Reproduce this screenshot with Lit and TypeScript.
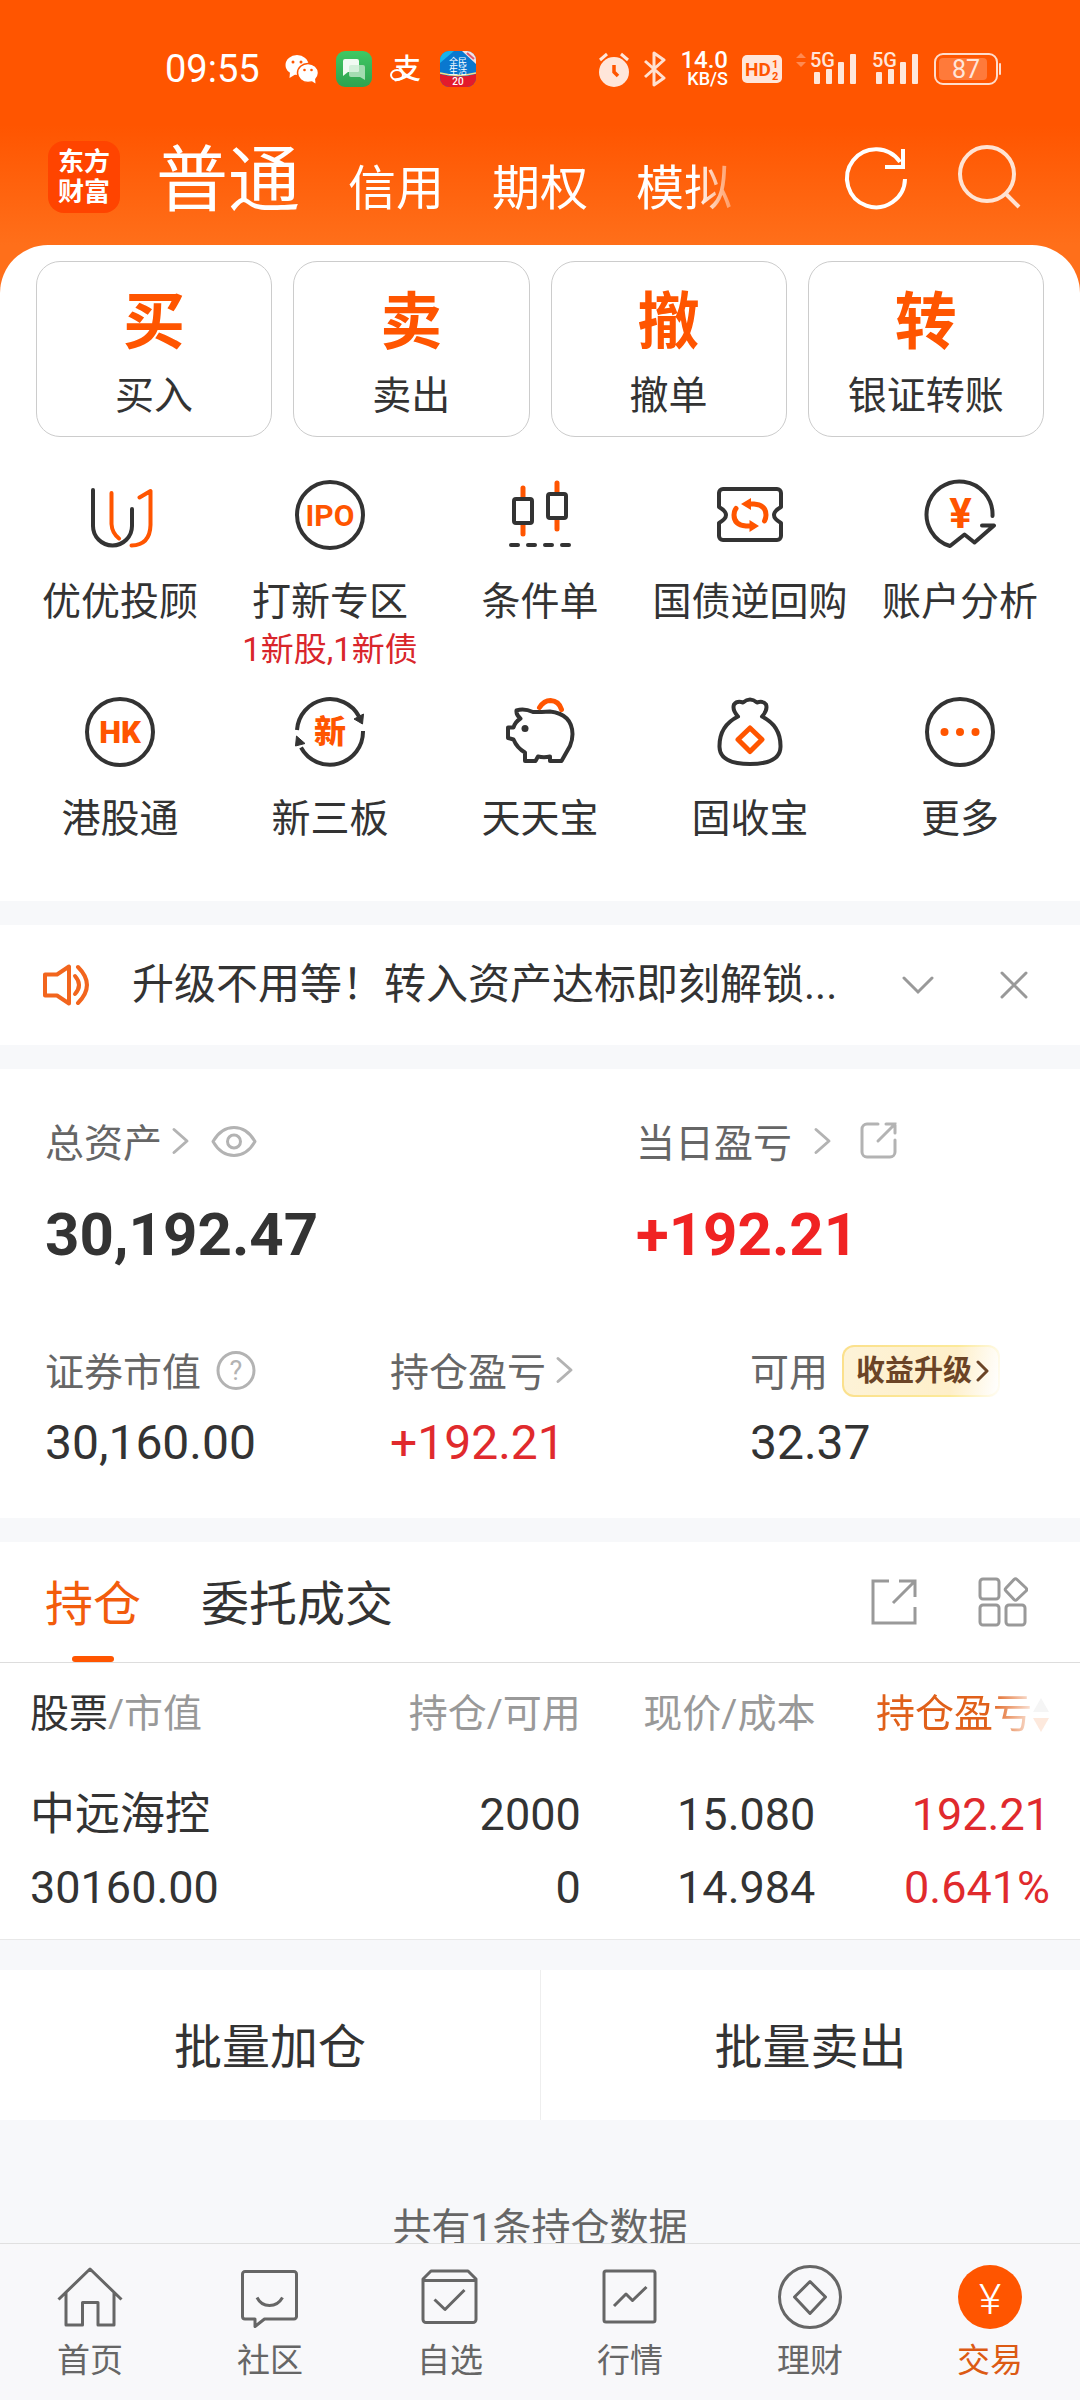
import { LitElement, html, css, svg, nothing } from "lit";
import type { TemplateResult } from "lit";
import { customElement, property, state } from "lit/decorators.js";
import { classMap } from "lit/directives/class-map.js";

type Shape = { w: number; h: number; art: TemplateResult };

const DARK = "#333";
const FLAME = "#ff5500";

const shapes: Record<string, Shape> = {
  /* status bar */
  wechat: {
    w: 36, h: 32,
    art: svg`<g fill="#fff"><ellipse cx="13" cy="12" rx="11.500" ry="10"/><path d="M6 19L5.500 25L12 21Z"/></g>
      <g fill="#fff" stroke="#ff5500" stroke-width="1.500"><ellipse cx="24" cy="20" rx="10.500" ry="9.500"/></g>
      <path d="M26 27L31.500 30.500L31 25Z" fill="#fff"/>
      <g fill="#ff5500"><circle cx="9" cy="9" r="1.500"/><circle cx="17" cy="9" r="1.500"/><circle cx="20.500" cy="17" r="1.300"/><circle cx="27.500" cy="17" r="1.300"/></g>`,
  },
  sms: {
    w: 36, h: 36,
    art: svg`<defs><linearGradient id="g" x1="0" y1="0" x2="0" y2="1"><stop offset="0" stop-color="#3fc863"/><stop offset="1" stop-color="#2fa250"/></linearGradient></defs>
      <rect width="36" height="36" rx="9" fill="url(#g)"/>
      <path d="M15 14H27a2 2 0 0 1 2 2V29L24 26H15a2 2 0 0 1-2-2V16a2 2 0 0 1 2-2Z" fill="#a3dcb1"/>
      <path d="M9 8H21a2 2 0 0 1 2 2V19a2 2 0 0 1-2 2H12L7 25V10a2 2 0 0 1 2-2Z" fill="#f1fbf3"/>
      <path d="M13 16a2 2 0 0 1 2-2H23V19a2 2 0 0 1-2 2H13Z" fill="#d3f0da"/>`,
  },
  alipay: {
    w: 36, h: 36,
    art: svg`<text x="19" y="28" font-size="28" font-weight="500" text-anchor="middle" fill="#fff">支</text>
      <ellipse cx="9" cy="24" rx="6" ry="5" fill="none" stroke="#fff" stroke-width="2"/>`,
  },
  life: {
    w: 36, h: 36,
    art: svg`<defs><clipPath id="c"><rect width="36" height="36" rx="9"/></clipPath></defs>
      <g clip-path="url(#c)"><rect width="36" height="36" fill="#0a78cf"/>
      <path d="M0 0H14L0 12Z" fill="#19b3ea"/><path d="M22 0H36V13Z" fill="#f3e3e6"/><path d="M27 2L34 8" stroke="#e4586b" stroke-width="2"/>
      <path d="M0 23Q18 28 36 23V36H0Z" fill="#e31b2c"/><path d="M0 22Q18 27 36 22" fill="none" stroke="#f5e08a" stroke-width="1.500"/></g>
      <g fill="#fff" text-anchor="middle"><text x="18" y="14" font-size="9">全民</text><text x="18" y="23" font-size="9">生活</text>
      <text x="18" y="34" font-size="10" font-weight="500">20</text></g>`,
  },
  alarm: {
    w: 32, h: 36,
    art: svg`<circle cx="16" cy="21" r="15" fill="#ffe6da"/><path d="M2 9L9 3M23 3L30 9" stroke="#ffe6da" stroke-width="3"/>
      <path d="M16 14V21L20 25" fill="none" stroke="#ff5500" stroke-width="3.500"/>`,
  },
  bluetooth: {
    w: 22, h: 36,
    art: svg`<path d="M1 10L20 27L10 34V2L20 9L1 26" fill="none" stroke="#ffe0d0" stroke-width="3" stroke-linejoin="round"/>`,
  },
  hd: {
    w: 40, h: 28,
    art: svg`<rect width="40" height="28" rx="5" fill="#ffe6da"/>
      <g fill="#ff5500" font-weight="700"><text x="3" y="21" font-size="19">HD</text><text x="30" y="13" font-size="11">1</text><text x="30" y="25" font-size="11">2</text></g>`,
  },
  updown: {
    w: 10, h: 34,
    art: svg`<path d="M0 6L5 1L10 6ZM0 10H10L5 15Z" fill="#ff8a52"/>`,
  },
  signal: {
    w: 48, h: 44,
    art: svg`<text x="0" y="20" font-size="20" font-weight="500" fill="#ffe6da">5G</text>
      <g fill="#ffe6da"><rect x="4" y="25" width="6" height="12" rx="1"/><rect x="16" y="22" width="6" height="15" rx="1"/><rect x="28" y="15" width="6" height="22" rx="1"/><rect x="40" y="7" width="6" height="30" rx="1"/></g>`,
  },
  battery: {
    w: 68, h: 32,
    art: svg`<rect x="1" y="1" width="62" height="30" rx="8" fill="none" stroke="#ffdccb" stroke-width="2"/>
      <rect x="5" y="5" width="48" height="22" rx="4" fill="#ff7a3a"/><rect x="65" y="10" width="2" height="12" rx="1" fill="#ffdccb"/>
      <text x="32" y="25" font-size="25" text-anchor="middle" fill="#ffe6da">87</text>`,
  },
  /* title bar */
  refresh: {
    w: 72, h: 72,
    art: svg`<g fill="none" stroke="#fff" stroke-width="4"><path d="M65 38A29 29 0 1 1 60 21"/><path d="M45 26H63V8"/></g>`,
  },
  search: {
    w: 72, h: 72,
    art: svg`<g fill="none" stroke="#ffe3d3" stroke-width="4"><circle cx="33" cy="33" r="27"/><path d="M52 53L65 66"/></g>`,
  },
  /* shortcut grid */
  advisor: {
    w: 72, h: 72,
    art: svg`<g fill="none" stroke-width="4" stroke-linecap="round" stroke-linejoin="round"><path d="M9 11V47A19.500 19.500 0 0 0 48 47V30" stroke="${DARK}"/>
      <path d="M27.500 14V45Q28 54 35 59.500M55.500 18.500L66.500 12V46Q66 66 47.500 66.500" stroke="${FLAME}"/></g>`,
  },
  ipo: {
    w: 72, h: 72,
    art: svg`<circle cx="36" cy="36" r="33" fill="none" stroke="${DARK}" stroke-width="4"/>
      <text x="36" y="47" font-size="30" font-weight="700" text-anchor="middle" fill="${FLAME}">IPO</text>`,
  },
  candles: {
    w: 72, h: 72,
    art: svg`<g fill="none" stroke-width="4" stroke-linecap="round"><path d="M19 9V18M19 46V55M53 4V13M53 41V50" stroke="${FLAME}" stroke-width="5"/>
      <g stroke="${DARK}"><rect x="10" y="20" width="18" height="24" rx="2"/><rect x="44" y="15" width="18" height="24" rx="2"/><path d="M7 66H14M24 66H31M41 66H48M58 66H65"/></g></g>`,
  },
  repo: {
    w: 72, h: 72,
    art: svg`<path d="M9 10H63a4 4 0 0 1 4 4V28Q60 32 60 36T67 44V57a4 4 0 0 1-4 4H9a4 4 0 0 1-4-4V44Q12 40 12 36T5 28V14a4 4 0 0 1 4-4Z" fill="none" stroke="${DARK}" stroke-width="4" stroke-linejoin="round"/>
      <g fill="none" stroke="${FLAME}" stroke-width="5" stroke-linecap="round"><path d="M35 25H40Q52 26 52 36Q52 39 50.500 42"/><path d="M37 47H32Q20 46 20 36Q20 32 22 29.500"/></g>
      <path d="M27 25L37 19V31ZM45 47L35.500 41V53Z" fill="${FLAME}"/>`,
  },
  analysis: {
    w: 72, h: 72,
    art: svg`<path d="M68.500 37A33 33 0 1 0 26 67L40.500 55.500L50.500 63.500L70 46.500H58" fill="none" stroke="${DARK}" stroke-width="4" stroke-linecap="round" stroke-linejoin="round"/>
      <text x="36.500" y="49" font-size="42" font-weight="700" text-anchor="middle" fill="${FLAME}">¥</text>`,
  },
  hk: {
    w: 72, h: 72,
    art: svg`<circle cx="36" cy="36" r="33" fill="none" stroke="${DARK}" stroke-width="4"/>
      <text x="36" y="47" font-size="31" font-weight="900" text-anchor="middle" fill="${FLAME}">HK</text>`,
  },
  otc: {
    w: 72, h: 72,
    art: svg`<g fill="none" stroke="${DARK}" stroke-width="4"><path d="M3 34A33 33 0 0 1 65 20.500"/><path d="M69 35A33 33 0 0 1 7 51.500"/></g>
      <path d="M60 23L69.500 18L68.500 28ZM2.500 40L1.500 50L11 47.500Z" fill="${DARK}" stroke="${DARK}"/>
      <text x="36" y="47" font-size="32" font-weight="900" text-anchor="middle" fill="${FLAME}">新</text>`,
  },
  piggy: {
    w: 72, h: 72,
    art: svg`<path d="M12.500 14.500Q20 12 29 16Q38 16 46 15.500Q68 18 68.500 38Q68.500 44 66 50L57.500 65H46V60.500Q40 62 34 60.500L31.500 65H21V56.500Q13 52 9.500 43.500L4 42V31.500H9.500Q11 26 16.500 22.500Q12 19 12.500 14.500Z" fill="none" stroke="${DARK}" stroke-width="4" stroke-linejoin="round"/>
      <circle cx="21" cy="32.500" r="3.500" fill="${DARK}"/><path d="M35.500 11.500Q40 4.500 46.500 4.500Q55 5 57.500 13.500" fill="none" stroke="${FLAME}" stroke-width="5" stroke-linecap="round"/>`,
  },
  bag: {
    w: 72, h: 72,
    art: svg`<path d="M24 20.500Q18 14 20 8.500Q23 4.500 29 6.500Q36 0.500 43 6.500Q49 4.500 52 8.500Q54 14 48 20.500Q67 30 66.500 51Q66 68 36 68Q6 68 5.500 51Q5 30 24 20.500Z" fill="none" stroke="${DARK}" stroke-width="4" stroke-linejoin="round"/>
      <path d="M36 32L48 43.500L36 55.500L24 43.500Z" fill="none" stroke="${FLAME}" stroke-width="5" stroke-linejoin="round"/>`,
  },
  more: {
    w: 72, h: 72,
    art: svg`<circle cx="36" cy="36" r="33" fill="none" stroke="${DARK}" stroke-width="4"/><g fill="${FLAME}"><circle cx="20.500" cy="36" r="4"/><circle cx="36" cy="36" r="4"/><circle cx="51.500" cy="36" r="4"/></g>`,
  },
  /* notice */
  speaker: {
    w: 48, h: 44,
    art: svg`<g fill="none" stroke="#f2651d" stroke-width="4" stroke-linejoin="round" stroke-linecap="round"><path d="M27 3.500V40.500L15 32.500H3V11.500H15Z"/><path d="M33 13Q41 22 33 31"/><path d="M36 4Q54 22 36 40"/></g>`,
  },
  down: { w: 32, h: 28, art: svg`<path d="M2 7L16 21L30 7" fill="none" stroke="#999" stroke-width="3" stroke-linecap="round"/>` },
  close: { w: 28, h: 28, art: svg`<path d="M2 2L26 26M26 2L2 26" fill="none" stroke="#999" stroke-width="3" stroke-linecap="round"/>` },
  /* assets */
  chevron: { w: 20, h: 48, art: svg`<path d="M4 9.500L17 21L4 32.500" fill="none" stroke="#b3b3b3" stroke-width="3" stroke-linecap="round" stroke-linejoin="round"/>` },
  eye: {
    w: 48, h: 48,
    art: svg`<g fill="none" stroke="#b3b3b3" stroke-width="3"><path d="M3 21.500C9 11 16 7.500 24 7.500S39 11 45 21.500C39 32 32 35.500 24 35.500S9 32 3 21.500Z" stroke-linejoin="round"/><circle cx="24" cy="21.500" r="6.500"/></g>`,
  },
  share: {
    w: 40, h: 48,
    art: svg`<g fill="none" stroke="#b3b3b3" stroke-width="3" stroke-linecap="round"><path d="M20 4H9a5 5 0 0 0-5 5V32a5 5 0 0 0 5 5H32a5 5 0 0 0 5-5V20"/><path d="M20 21L37 4M28 4H37V13"/></g>`,
  },
  help: {
    w: 40, h: 48,
    art: svg`<circle cx="20" cy="21.500" r="18" fill="none" stroke="#b3b3b3" stroke-width="3"/><text x="20" y="31" font-size="27" text-anchor="middle" fill="#b3b3b3">?</text>`,
  },
  go: { w: 14, h: 24, art: svg`<path d="M2 3L11 12L2 21" fill="none" stroke="#6b4426" stroke-width="3" stroke-linecap="round" stroke-linejoin="round"/>` },
  /* positions */
  export: { w: 48, h: 48, art: svg`<path d="M19 3H3V45H45V29M23 25L45 3M29 3H45V19" fill="none" stroke="#999" stroke-width="3"/>` },
  tiles: {
    w: 50, h: 50,
    art: svg`<g fill="none" stroke="#999" stroke-width="3" stroke-linejoin="round"><rect x="2" y="2" width="19" height="20" rx="3"/><rect x="2" y="28" width="19" height="20" rx="3"/><rect x="28" y="28" width="19" height="20" rx="3"/>
      <path d="M36 2.500Q37.500 1 39 2.500L48 11Q49.500 12.500 48 14L39 22.500Q37.500 24 36 22.500L28 14Q26.500 12.500 28 11Z"/></g>`,
  },
  sort: { w: 18, h: 40, art: svg`<path d="M1 18L9 4L17 18Z" fill="#bbb"/><path d="M1 24H17L9 38Z" fill="#f26a1b"/>` },
  /* bottom navigation */
  home: { w: 66, h: 66, art: svg`<path d="M1.500 35.500L33 5L64.500 35.500M9 29V61H25.500V38.500H41V61H57V29" fill="none" stroke="#666" stroke-width="3" stroke-linejoin="round"/>` },
  community: {
    w: 66, h: 66,
    art: svg`<path d="M8 7.500H57a2.500 2.500 0 0 1 2.500 2.500V52.500a2.500 2.500 0 0 1-2.500 2.500H27.500L18 62.500V55H8a2.500 2.500 0 0 1-2.500-2.500V10a2.500 2.500 0 0 1 2.500-2.500ZM20 33.500Q24 41.500 32.500 41.500T45.500 33.500" fill="none" stroke="#666" stroke-width="3" stroke-linejoin="round"/>`,
  },
  watch: {
    w: 66, h: 66,
    art: svg`<path d="M6 15L14 7H51L59 15V55.500a3 3 0 0 1-3 3H9a3 3 0 0 1-3-3ZM6 16.500H59M17.500 35.500L28 45.500L47.500 26" fill="none" stroke="#666" stroke-width="3" stroke-linejoin="round"/>`,
  },
  quotes: {
    w: 66, h: 66,
    art: svg`<rect x="7" y="7" width="51" height="51" rx="2" fill="none" stroke="#666" stroke-width="3"/><path d="M17 42L29 30L35.500 36.500L49.500 23" fill="none" stroke="#666" stroke-width="3" stroke-linejoin="round"/>`,
  },
  wealth: {
    w: 66, h: 66,
    art: svg`<circle cx="33" cy="33" r="30.500" fill="none" stroke="#666" stroke-width="3"/><path d="M33 17.500L48.500 33L33 49.500L17.500 33Z" fill="none" stroke="#666" stroke-width="3" stroke-linejoin="round"/>`,
  },
  trade: {
    w: 66, h: 66,
    art: svg`<circle cx="33" cy="33" r="32" fill="${FLAME}"/><text x="33" y="50" font-size="43" font-weight="300" text-anchor="middle" fill="#fff">¥</text>`,
  },
};

@customElement("app-glyph")
class AppGlyph extends LitElement {
  static styles = css`
    :host { display: inline-flex; flex: none; }
    .art { display: block; }
    text { font-family: Roboto, "Noto Sans CJK SC", sans-serif; }
  `;
  @property() name = "";
  render() {
    const s = shapes[this.name];
    return html`<svg class="art" width=${s.w} height=${s.h} viewBox="0 0 ${s.w} ${s.h}" aria-hidden="true">${s.art}</svg>`;
  }
}

const actions = [["买", "买入"], ["卖", "卖出"], ["撤", "撤单"], ["转", "银证转账"]];
const shortcuts: { icon: string; label: string; sub?: string }[] = [
  { icon: "advisor", label: "优优投顾" },
  { icon: "ipo", label: "打新专区", sub: "1新股,1新债" },
  { icon: "candles", label: "条件单" },
  { icon: "repo", label: "国债逆回购" },
  { icon: "analysis", label: "账户分析" },
  { icon: "hk", label: "港股通" },
  { icon: "otc", label: "新三板" },
  { icon: "piggy", label: "天天宝" },
  { icon: "bag", label: "固收宝" },
  { icon: "more", label: "更多" },
];
const positions = [
  { name: "中远海控", value: "30160.00", held: "2000", usable: "0", price: "15.080", cost: "14.984", gain: "192.21", rate: "0.641%" },
];
const destinations = [
  ["home", "首页"], ["community", "社区"], ["watch", "自选"], ["quotes", "行情"], ["wealth", "理财"], ["trade", "交易"],
];

@customElement("app-root")
class AppRoot extends LitElement {
  static styles = css`
    :host {
      display: flex;
      flex-direction: column;
      height: 100vh;
      background: #f7f8fa;
      color: #333;
      font-family: Roboto, "Noto Sans CJK SC", sans-serif;
      font-size: 39px;
      line-height: 48px;
    }
    * { box-sizing: border-box; }
    button { margin: 0; padding: 0; border: 0; background: none; color: inherit; font: inherit; text-align: inherit; cursor: pointer; }
    a { color: inherit; text-decoration: none; }

    .page {
      flex: 1;
      min-height: 0;
      overflow: hidden auto;
      scrollbar-width: none;
      background: linear-gradient(#ff5500 0, #ff5500 125px, #ff6f1a 245px) no-repeat;
      background-size: 100% 300px;
    }
    .status { display: flex; align-items: center; justify-content: space-between; height: 138px; padding: 0 78px 0 165px; color: #fff; }
    .status-side { display: flex; align-items: center; }
    .left { gap: 16px; }
    .right { gap: 14px; }
    .clock { font-size: 38px; margin-right: 8px; }
    .net { display: flex; flex-direction: column; align-items: flex-end; font-weight: 500; }
    .net-rate { font-size: 24px; line-height: 20px; }
    .net-unit { font-size: 18px; line-height: 18px; }
    .cell { display: flex; align-items: center; gap: 4px; }

    .title { display: flex; align-items: center; height: 78px; margin-bottom: 29px; padding: 0 54px 0 48px; color: #fff; }
    .logo {
      display: flex; flex-direction: column; justify-content: center; flex: none; width: 72px; height: 72px;
      border-radius: 16px; background: #ff4400; text-align: center; font-size: 26px; font-weight: 700; line-height: 30px;
    }
    .accounts {
      display: flex; align-items: baseline; gap: 48px; flex: 1; min-width: 0; margin: 0 48px 0 36px; padding-top: 16px; overflow: hidden; white-space: nowrap;
      mask-image: linear-gradient(to right, #000 calc(100% - 96px), transparent calc(100% - 42px));
    }
    .account { font-size: 48px; line-height: 84px; }
    .account.on { font-size: 72px; }
    .tools { display: flex; gap: 42px; }
    .tool { display: flex; }

    .sheet { padding: 16px 0 58px; border-radius: 48px 48px 0 0; background: #fff; }
    .actions { display: grid; grid-template-columns: repeat(4, 1fr); gap: 21px; padding: 0 36px; }
    .action { display: flex; flex-direction: column; align-items: center; gap: 10px; padding: 22px 0 16px; border: 1px solid #ccc; border-radius: 24px; }
    .mark { color: #ff5500; font-size: 62px; font-weight: 700; line-height: 78px; }
    .shortcuts { display: grid; grid-template-columns: repeat(5, 1fr); row-gap: 26px; margin-top: 42px; padding: 0 15px; }
    .shortcut { display: flex; flex-direction: column; align-items: center; white-space: nowrap; }
    .caption { margin-top: 27px; }
    .sub { margin-top: 4px; color: #d9262b; font-size: 33px; line-height: 40px; }

    .band { margin-top: 24px; background: #fff; }
    .lower { background: #f7f8fa; display: flow-root; }
    .notice { display: flex; align-items: center; height: 120px; padding: 0 52px 0 42px; }
    .message { flex: 1; min-width: 0; margin: 0 42px; overflow: hidden; white-space: nowrap; text-overflow: ellipsis; font-size: 42px; }
    .notice-tools { display: flex; gap: 66px; }

    .assets { padding: 51px 45px 45px; }
    .pair { display: grid; grid-template-columns: 591fr 399fr; }
    .trio { display: grid; grid-template-columns: 345fr 360fr 285fr; margin-top: 78px; }
    .label { display: flex; align-items: center; height: 48px; color: #666; white-space: nowrap; }
    .label button, .label span { display: flex; }
    .near { margin-left: 8px; }
    .mid { margin-left: 15px; }
    .far { margin-left: 20px; }
    .wide { margin-left: 26px; }
    .big { margin-top: 31px; font-size: 60px; font-weight: 700; line-height: 72px; }
    .num { margin-top: 16px; font-size: 48px; line-height: 60px; }
    .up { color: #e02a2d; }
    .big.up { color: #f02323; }
    .label .badge {
      align-items: center; align-self: flex-end; gap: 4px; height: 52px; margin-left: 14px; padding: 0 8px 0 12px; border: 2px solid transparent; border-radius: 12px;
      background:
        linear-gradient(100deg, #fdf3d8 0, #feefc9 70%, #fff 100%) padding-box,
        linear-gradient(100deg, #fbe08c 0, #fcea9a 70%, #fffdf6 100%) border-box;
      color: #6b4426; font-size: 29px; font-weight: 700;
    }

    .tabs { display: flex; align-items: center; padding: 0 52px 0 45px; border-bottom: 1px solid #ddd; }
    .tab { display: flex; flex-direction: column; align-items: center; margin-right: 60px; padding-top: 12px; font-size: 48px; line-height: 102px; }
    .tab::after { content: ""; width: 42px; height: 6px; border-radius: 3px; }
    .tab.on { color: #f25c0c; }
    .tab.on::after { background: #ff5500; }
    .tab-tools { display: flex; align-items: center; gap: 60px; margin-left: auto; }

    .holdings { padding: 0 30px 15px; border-bottom: 1px solid #e8e8e8; }
    .grid { width: 100%; border-collapse: collapse; table-layout: fixed; }
    .grid th { padding: 27px 0 40px; color: #999; font-weight: 400; text-align: right; white-space: nowrap; }
    .grid td { padding: 0; text-align: right; font-size: 45px; line-height: 73px; }
    .grid th:first-child, .grid td:first-child { text-align: left; }
    .c-name { width: 31%; }
    .c-held { width: 23%; }
    .strong { color: #333; }
    .line { display: block; }
    .sorter { display: inline-flex; align-items: center; height: 48px; color: #e0601a; mask-image: linear-gradient(to right, #000 66%, rgba(0, 0, 0, 0.15) 90%); vertical-align: top; }

    .batch { display: grid; grid-template-columns: 1fr 1fr; margin-top: 30px; background: #fff; }
    .batch-button { padding: 48px 0 42px; font-size: 48px; line-height: 60px; text-align: center; }
    .batch-button + .batch-button { border-left: 1px solid #eee; }
    .count { margin: 84px 0 0; padding-bottom: 48px; color: #666; text-align: center; }

    .nav { display: grid; grid-template-columns: repeat(6, 1fr); flex: none; padding: 20px 0 19px; border-top: 1px solid #e0e0e0; background: #f8f8fa; }
    .dest { display: flex; flex-direction: column; align-items: center; gap: 11px; color: #666; font-size: 33px; line-height: 40px; }
    .dest.on { color: #dc5a14; }
  `;

  @state() private account = "普通";
  @state() private tab = "持仓";

  private icon(name: string) {
    return html`<app-glyph name=${name}></app-glyph>`;
  }

  render() {
    return html`
      <main class="page">
        <div class="status">
          <div class="status-side left">
            <time class="clock">09:55</time>
            ${["wechat", "sms", "alipay", "life"].map((n) => this.icon(n))}
          </div>
          <div class="status-side right">
            ${this.icon("alarm")}${this.icon("bluetooth")}
            <span class="net"><span class="net-rate">14.0</span><span class="net-unit">KB/S</span></span>
            ${this.icon("hd")}
            <span class="cell">${this.icon("updown")}${this.icon("signal")}</span>
            ${this.icon("signal")}${this.icon("battery")}
          </div>
        </div>

        <header class="title">
          <div class="logo"><span>东方</span><span>财富</span></div>
          <nav class="accounts">
            ${["普通", "信用", "期权", "模拟"].map(
              (a) => html`<button class=${classMap({ account: true, on: a === this.account })} @click=${() => (this.account = a)}>${a}</button>`
            )}
          </nav>
          <div class="tools">
            <button class="tool" aria-label="刷新">${this.icon("refresh")}</button>
            <button class="tool" aria-label="搜索">${this.icon("search")}</button>
          </div>
        </header>

        <section class="sheet">
          <div class="actions">
            ${actions.map(([mark, label]) => html`<button class="action"><span class="mark">${mark}</span><span>${label}</span></button>`)}
          </div>
          <div class="shortcuts">
            ${shortcuts.map(
              (s) => html`<a class="shortcut" href="#${s.icon}">${this.icon(s.icon)}<span class="caption">${s.label}</span>${s.sub ? html`<span class="sub">${s.sub}</span>` : nothing}</a>`
            )}
          </div>
        </section>

        <div class="lower">
          <section class="band notice">
            ${this.icon("speaker")}
            <span class="message">升级不用等！转入资产达标即刻解锁...</span>
            <div class="notice-tools">
              <button class="tool" aria-label="展开">${this.icon("down")}</button>
              <button class="tool" aria-label="关闭">${this.icon("close")}</button>
            </div>
          </section>

          <section class="band assets">
            <div class="pair">
              <div>
                <div class="label"><span>总资产</span><span class="near">${this.icon("chevron")}</span><button class="far" aria-label="隐藏金额">${this.icon("eye")}</button></div>
                <div class="big">30,192.47</div>
              </div>
              <div>
                <div class="label"><span>当日盈亏</span><span class="far">${this.icon("chevron")}</span><button class="wide" aria-label="分享">${this.icon("share")}</button></div>
                <div class="big up">+192.21</div>
              </div>
            </div>
            <div class="trio">
              <div>
                <div class="label"><span>证券市值</span><button class="mid" aria-label="说明">${this.icon("help")}</button></div>
                <div class="num">30,160.00</div>
              </div>
              <div>
                <div class="label"><span>持仓盈亏</span><span class="near">${this.icon("chevron")}</span></div>
                <div class="num up">+192.21</div>
              </div>
              <div>
                <div class="label"><span>可用</span><button class="badge"><span>收益升级</span>${this.icon("go")}</button></div>
                <div class="num">32.37</div>
              </div>
            </div>
          </section>

          <section class="band">
            <div class="tabs">
              ${["持仓", "委托成交"].map(
                (t) => html`<button class=${classMap({ tab: true, on: t === this.tab })} @click=${() => (this.tab = t)}>${t}</button>`
              )}
              <div class="tab-tools">
                <button class="tool" aria-label="分享持仓">${this.icon("export")}</button>
                <button class="tool" aria-label="布局">${this.icon("tiles")}</button>
              </div>
            </div>
            <div class="holdings">
              <table class="grid">
                <colgroup><col class="c-name" /><col class="c-held" /><col /><col /></colgroup>
                <thead>
                  <tr>
                    <th scope="col"><span class="strong">股票</span>/市值</th>
                    <th scope="col">持仓/可用</th>
                    <th scope="col">现价/成本</th>
                    <th scope="col"><button class="sorter">持仓盈亏${this.icon("sort")}</button></th>
                  </tr>
                </thead>
                <tbody>
                  ${positions.map(
                    (p) => html`<tr>
                      <td><span class="line">${p.name}</span><span class="line">${p.value}</span></td>
                      <td><span class="line">${p.held}</span><span class="line">${p.usable}</span></td>
                      <td><span class="line">${p.price}</span><span class="line">${p.cost}</span></td>
                      <td class="up"><span class="line">${p.gain}</span><span class="line">${p.rate}</span></td>
                    </tr>`
                  )}
                </tbody>
              </table>
            </div>
          </section>

          <div class="batch">
            <button class="batch-button">批量加仓</button>
            <button class="batch-button">批量卖出</button>
          </div>
          <p class="count">共有1条持仓数据</p>
        </div>
      </main>

      <nav class="nav">
        ${destinations.map(
          ([icon, label]) => html`<a class=${classMap({ dest: true, on: icon === "trade" })} href="#${icon}">${this.icon(icon)}<span>${label}</span></a>`
        )}
      </nav>
    `;
  }
}
